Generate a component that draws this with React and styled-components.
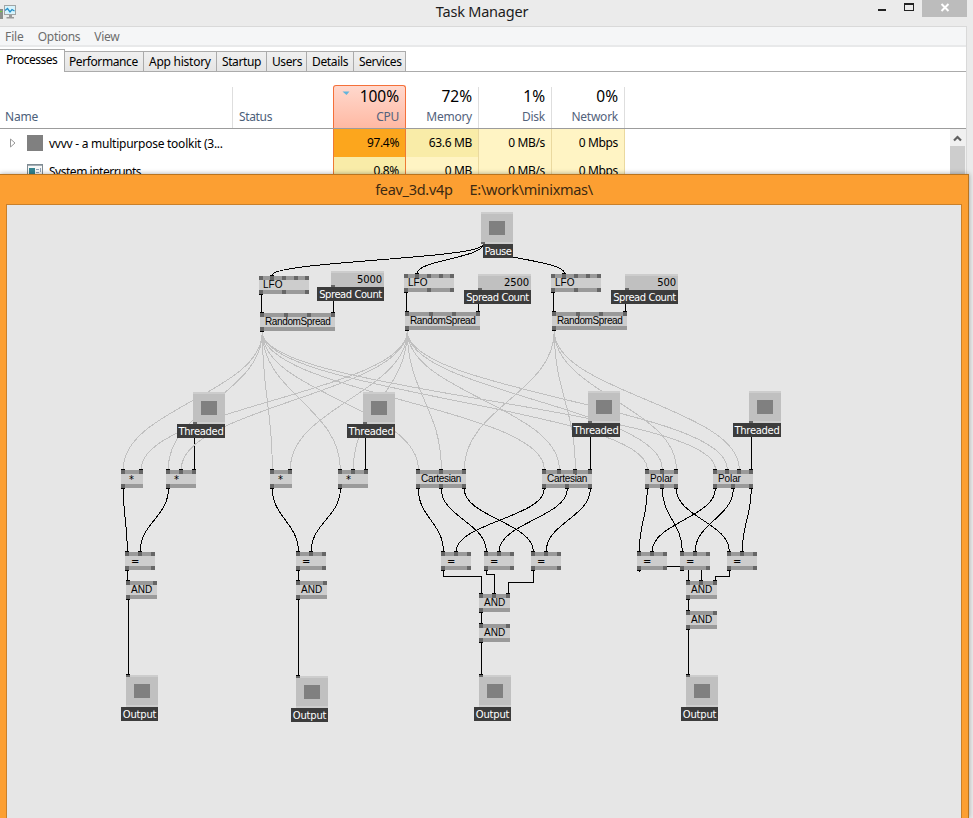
import React from 'react';
import styled, { createGlobalStyle } from 'styled-components';

const GlobalStyle = createGlobalStyle`
  * { box-sizing: border-box; }
  html, body { margin: 0; height: 100%; overflow: hidden; background: #ebebeb; }
  body { font-family: "Noto Sans", "Open Sans", sans-serif; font-size: 12px; color: #000; }
`;

const Desktop = styled.div`
  width: 973px;
  height: 818px;
  display: flex;
  flex-direction: column;
  overflow: hidden;
  background: #ebebeb;
`;

/* ---------- Task manager ---------- */
const TaskManager = styled.section`
  height: 174px;
  flex: none;
  overflow: hidden;
  display: flex;
  flex-direction: column;
`;
const TitleBar = styled.header`
  height: 26px;
  flex: none;
  display: grid;
  grid-template-columns: 160px 1fr 160px;
  align-items: start;
`;
const AppIcon = styled.svg`
  display: block;
  margin-top: 4px;
`;
const Title = styled.h1`
  margin: 0 0 0 -9px;
  font-size: 14.5px;
  line-height: 22px;
  font-weight: 400;
  text-align: center;
  color: #1c1c1c;
  letter-spacing: -0.22px;
`;
const WindowButtons = styled.div`
  display: flex;
  justify-content: flex-end;
  padding-right: 6px;
`;
const WindowButton = styled.span`
  width: ${(p) => p.$w}px;
  height: 17px;
  display: block;
  background: ${(p) => (p.$close ? '#bcbcbc' : 'transparent')};
  svg { display: block; }
`;
const Client = styled.div`
  flex: 1;
  min-height: 0;
  width: 967px;
  background: #fff;
  border-top: 1px solid #d9d9d9;
  border-right: 1px solid #d9d9d9;
  display: flex;
  flex-direction: column;
`;
const MenuBar = styled.nav`
  height: 20px;
  flex: none;
  display: flex;
  gap: 14px;
  padding-left: 5px;
  line-height: 19px;
  color: #6d6d6d;
  background: #f5f6f7;
  border-bottom: 2px solid #e8e9ea;
`;
const MenuItem = styled.span`
  letter-spacing: ${(p) => p.$track}px;
`;
const TabStrip = styled.div`
  height: 25px;
  flex: none;
  padding-top: 2px;
  display: flex;
  align-items: flex-end;
  border-bottom: 1px solid #ababab;
`;
const Tab = styled.div`
  width: ${(p) => p.$w}px;
  height: ${(p) => (p.$active ? 23 : 20)}px;
  margin-bottom: ${(p) => (p.$active ? -1 : 0)}px;
  line-height: 20px;
  padding-left: ${(p) => p.$pad}px;
  white-space: nowrap;
  letter-spacing: ${(p) => p.$track}px;
  background: ${(p) => (p.$active ? '#fff' : 'linear-gradient(#f0f0f0, #e5e5e5)')};
  border-top: 1px solid #ababab;
  border-right: 1px solid #ababab;
`;
const HeaderRow = styled.div`
  height: 57px;
  flex: none;
  padding-top: 13px;
  display: grid;
  grid-template-columns: 233px 100px repeat(4, 73px);
  border-bottom: 1px solid #9c9c9c;
`;
const TextHeader = styled.div`
  margin-top: 2px;
  padding: 20px 0 0 ${(p) => p.$pad}px;
  line-height: 19px;
  color: #4c607a;
  letter-spacing: ${(p) => p.$track}px;
  border-right: ${(p) => (p.$line ? '1px solid #dedede' : '0')};
`;
const MetricHeader = styled.div`
  margin-top: ${(p) => (p.$hot ? 0 : 2)}px;
  padding: ${(p) => (p.$hot ? 1 : 0)}px 6px 0 0;
  display: grid;
  grid-template-columns: 8px 1fr;
  grid-template-rows: 19px 20px;
  text-align: right;
  color: #53627c;
  background: ${(p) => (p.$hot ? 'linear-gradient(#ffd8cd, #ffb9a3)' : '#fff')};
  border: 0 solid #f4703a;
  border-width: ${(p) => (p.$hot ? '1px 1px 0' : '0 1px 0 0')};
  border-color: ${(p) => (p.$hot ? '#f4703a' : '#dedede')};
  border-radius: ${(p) => (p.$hot ? '3px 3px 0 0' : '0')};
`;
const SortArrow = styled.svg`
  margin: 4px 0 0 8px;
`;
const Metric = styled.strong`
  grid-column: 2;
  font-size: 15.5px;
  font-weight: 400;
  line-height: 18px;
  letter-spacing: -0.05px;
  color: #000;
`;
const MetricName = styled.span`
  grid-column: 1 / 3;
  line-height: 21px;
  letter-spacing: -0.25px;
`;
const TableArea = styled.div`
  flex: 1;
  min-height: 0;
  display: grid;
  grid-template-columns: 1fr 16px;
  overflow: hidden;
`;
const ProcessRow = styled.div`
  height: 28px;
  display: grid;
  grid-template-columns: 333px repeat(4, 73px);
  line-height: 27px;
`;
const ProcessName = styled.div`
  display: flex;
  align-items: center;
  white-space: nowrap;
  letter-spacing: ${(p) => p.$track}px;
  svg { flex: none; }
`;
const IconSlot = styled.span`
  width: 22px;
  flex: none;
  display: flex;
`;
const ExpandSlot = styled.span`
  width: 27px;
  flex: none;
  display: flex;
  padding-left: 9px;
`;
const heat = { hot: '#fca61d', warm: '#f9eca8', mild: '#fff4c4' };
const Value = styled.div`
  padding-right: 6px;
  text-align: right;
  white-space: nowrap;
  letter-spacing: -0.35px;
  background: ${(p) => heat[p.$heat]};
  border: 0 solid ${(p) => (p.$cpu ? '#ee7a35' : '#ead9a0')};
  border-width: ${(p) => (p.$cpu ? '0 1px' : '0 1px 0 0')};
`;
const ScrollBar = styled.div`
  display: flex;
  flex-direction: column;
  padding-right: 1px;
  background: #f0f0f0;
`;
const ScrollThumb = styled.div`
  flex: 1;
  background: #cdcdcd;
`;

/* ---------- Patch window ---------- */
const PatchWindow = styled.section`
  flex: 1;
  min-height: 0;
  width: 969px;
  background: #fc9f32;
  border-top: 1px solid #b9741f;
  border-right: 1px solid #b9741f;
  padding: 0 6px;
  display: flex;
  flex-direction: column;
  box-shadow: 0 0 5px rgba(0, 0, 0, 0.35);
  z-index: 1;
`;
const PatchTitle = styled.h2`
  margin: 0;
  height: 29px;
  flex: none;
  display: flex;
  justify-content: center;
  gap: 17px;
  font-size: 14.5px;
  line-height: 29px;
  font-weight: 400;
  color: #3d2a12;
  letter-spacing: -0.3px;
`;
const Canvas = styled.div`
  position: relative;
  flex: 1;
  overflow: hidden;
  background: #e6e6e6;
  border: 1px solid #c9802b;
  border-bottom: 0;
`;
const Wires = styled.svg`
  position: absolute;
  left: 0;
  top: 0;
  display: block;
  fill: none;
  shape-rendering: crispEdges;
`;
const Placed = styled.div`
  position: absolute;
  left: ${(p) => p.$x - 7}px;
  top: ${(p) => p.$y - 205}px;
  width: ${(p) => p.$w}px;
  height: ${(p) => p.$h}px;
`;
const NodeBody = styled(Placed)`
  background: #cdcdcd;
  border: 0 solid #9a9a9a;
  border-width: 4px 0;
  padding-left: ${(p) => p.$pad}px;
  font-family: ${(p) => (p.$operator ? '"DejaVu Sans"' : '"Liberation Sans", Arial')}, sans-serif;
  font-size: 10px;
  line-height: ${(p) => (p.$operator ? 11 : 10)}px;
  white-space: nowrap;
  letter-spacing: ${(p) => p.$track || 0}px;
`;
const Pin = styled.i`
  position: absolute;
  left: ${(p) => p.$at}px;
  ${(p) => (p.$out ? 'bottom' : 'top')}: -4px;
  width: 4px;
  height: ${(p) => (p.$wired ? 5 : 4)}px;
  background: #666;
  margin: ${(p) => (p.$wired ? '-1px 0' : '0')};
  border: 0 solid #000;
  border-${(p) => (p.$out ? 'bottom' : 'top')}-width: ${(p) => (p.$wired ? 1 : 0)}px;
`;
const Toggle = styled(Placed)`
  background: #c0c0c0;
  border: 0 solid #cdcdcd;
  border-width: 2px 0;
  padding: 7px 8px;
`;
const ToggleMark = styled.div`
  height: 14px;
  background: #808080;
`;
const NumberBox = styled(Placed)`
  background: #c0c0c0;
  border-top: 2px solid #cdcdcd;
  padding-right: 2px;
  text-align: right;
  font-family: "DejaVu Sans", sans-serif;
  font-size: 10px;
  line-height: 13px;
  letter-spacing: -0.1px;
`;
const Caption = styled(Placed)`
  background: #3c3c3c;
  color: #fff;
  font-family: "DejaVu Sans", sans-serif;
  font-size: 10px;
  line-height: 16px;
  text-align: center;
  white-space: nowrap;
  letter-spacing: ${(p) => p.$track || -0.2}px;
`;
const BoxPin = styled.i`
  position: absolute;
  left: 0;
  top: ${(p) => (p.$low ? 28 : -3)}px;
  width: 4px;
  height: ${(p) => (p.$low ? 2 : 3)}px;
  background: #666;
  border-top: ${(p) => (p.$low ? 0 : 1)}px solid #000;
`;
const ValuePin = styled.i`
  position: absolute;
  left: 0;
  bottom: 0;
  width: 4px;
  height: 2px;
  background: #666;
`;

function Node({ x, y, w, label, pad = 5, track, operator, ins = [], outs = [], on = [], sent = [] }) {
  return (
    <NodeBody $x={x} $y={y} $w={w} $h={18} $pad={pad} $track={track} $operator={operator}>
      {label}
      {ins.map((p, i) => <Pin key={'i' + p} $at={p} $wired={on.includes(i)} />)}
      {outs.map((p, i) => <Pin key={'o' + p} $at={p} $out $wired={sent.includes(i)} />)}
    </NodeBody>
  );
}

function ToggleBox({ x, y, label, lx, lw, output, track }) {
  return (
    <>
      <Toggle $x={x} $y={y} $w={32} $h={32}>
        <ToggleMark />
        <BoxPin $low={!output} />
      </Toggle>
      <Caption $x={lx} $y={y + 32} $w={lw} $h={14} $track={track}>{label}</Caption>
    </>
  );
}

const curve = (x1, y1, x2, y2) => {
  const c = (y2 - y1) * 0.44;
  return `M${x1 + 0.3} ${y1}C${x1 + 0.3} ${y1 + c} ${x2 + 0.3} ${y2 - c} ${x2 + 0.3} ${y2}`;
};

const spreadLinks = [
  [262, 332, [123, 168, 272, 340, 418, 544, 647, 715]],
  [407, 331, [141, 181, 290, 353, 441, 559, 662, 727]],
  [554, 331, [464, 575, 676, 739]],
];
const curvedLinks = [
  [482, 245, 272, 275], [482, 245, 417, 273], [482, 245, 564, 273],
  [123, 489, 127, 551], [168, 489, 140, 551], [272, 489, 298, 551], [340, 489, 311, 551],
  [418, 489, 443, 551], [441, 489, 486, 551], [464, 489, 533, 551],
  [544, 489, 456, 551], [567, 489, 499, 551], [590, 489, 546, 551],
  [647, 489, 639, 551], [662, 489, 682, 551], [676, 489, 729, 551],
  [715, 489, 652, 551], [733, 489, 695, 551], [751, 489, 742, 551],
];
const verticalLinks = [
  [261, 294, 312], [406, 292, 311], [553, 292, 311],
  [333, 301, 312], [478, 304, 311], [625, 304, 311],
  [194, 438, 469], [365, 438, 469], [590, 437, 469], [751, 437, 469],
  [127, 570, 580], [298, 570, 580], [128, 599, 674], [298, 599, 675],
  [481, 612, 623], [481, 642, 674], [688, 599, 610], [688, 629, 674], [701, 570, 580],
];
const steppedLinks = [
  'M443.5 570V576.5H481.5V594',
  'M486.5 570V574.5H494.5V594',
  'M533.5 570V582.5H508.5V594',
  'M639.5 570V572M667 566.5H688.5V581',
  'M729.5 570V576.5H715.5V581',
];

const lfos = [[259, 276], [404, 274], [551, 274]];
const spreads = [[260, 313], [405, 312], [552, 312]];
const counts = [[331, 271, '5000'], [478, 274, '2500'], [625, 274, '500']];
const equals = [125, 296, 441, 484, 531, 637, 680, 727];

function Patch() {
  return (
    <Canvas>
      <Wires width="954" height="613" viewBox="7 205 954 613">
        <g stroke="#000">
          {curvedLinks.map((l) => <path key={l.join()} d={curve(...l)} />)}
          {verticalLinks.map(([x, a, b]) => <path key={[x, a].join()} d={`M${x + 0.5} ${a}V${b}`} />)}
          {steppedLinks.map((d) => <path key={d} d={d} />)}
        </g>
        <g stroke="#c0c0c0">
          {spreadLinks.map(([x, y, ends]) => ends.map((e) => <path key={e} d={curve(x, y, e, 469)} />))}
        </g>
      </Wires>

      {lfos.map(([x, y]) => (
        <Node key={x} x={x} y={y} w={50} pad={4} label="LFO" ins={[0, 11, 23, 35, 46]} outs={[0, 23, 46]} on={[1]} sent={[0]} />
      ))}
      {spreads.map(([x, y]) => (
        <Node key={x} x={x} y={y} w={75} track={-0.38} label="RandomSpread" ins={[0, 24, 47, 71]} outs={[0]} on={[0, 3]} sent={[0]} />
      ))}
      {counts.map(([x, y, v]) => (
        <React.Fragment key={x}>
          <NumberBox $x={x} $y={y} $w={53} $h={16}>{v}<ValuePin /></NumberBox>
          <Caption $x={x - 14} $y={y + 16} $w={67} $h={14} $track={-0.45}>Spread Count</Caption>
        </React.Fragment>
      ))}
      <ToggleBox x={481} y={212} label="Pause" lx={483} lw={30} track={-0.5} />
      <ToggleBox x={193} y={392} label="Threaded" lx={177} lw={48} track={-0.3} />
      <ToggleBox x={363} y={392} label="Threaded" lx={347} lw={48} track={-0.3} />
      <ToggleBox x={588} y={391} label="Threaded" lx={572} lw={48} track={-0.3} />
      <ToggleBox x={749} y={391} label="Threaded" lx={733} lw={48} track={-0.3} />

      <Node x={121} y={470} w={22} pad={8} operator label="*" ins={[0, 18]} outs={[0]} on={[0, 1]} sent={[0]} />
      <Node x={166} y={470} w={30} pad={8} operator label="*" ins={[0, 13, 26]} outs={[0]} on={[0, 1, 2]} sent={[0]} />
      <Node x={270} y={470} w={22} pad={8} operator label="*" ins={[0, 18]} outs={[0]} on={[0, 1]} sent={[0]} />
      <Node x={338} y={470} w={30} pad={8} operator label="*" ins={[0, 13, 26]} outs={[0]} on={[0, 1, 2]} sent={[0]} />
      <Node x={416} y={470} w={50} track={-0.3} label="Cartesian" ins={[0, 23, 46]} outs={[0, 23, 46]} on={[0, 1, 2]} sent={[0, 1, 2]} />
      <Node x={542} y={470} w={50} track={-0.3} label="Cartesian" ins={[0, 15, 31, 46]} outs={[0, 23, 46]} on={[0, 1, 2, 3]} sent={[0, 1, 2]} />
      <Node x={645} y={470} w={33} track={-0.1} label="Polar" ins={[0, 15, 29]} outs={[0, 15, 29]} on={[0, 1, 2]} sent={[0, 1, 2]} />
      <Node x={713} y={470} w={40} track={-0.1} label="Polar" ins={[0, 12, 24, 36]} outs={[0, 18, 36]} on={[0, 1, 2, 3]} sent={[0, 1, 2]} />

      {equals.map((x) => (
        <Node key={x} x={x} y={552} w={30} pad={6} operator label="=" ins={[0, 13, 26]} outs={[0, 26]} on={[0, 1]} sent={[0]} />
      ))}
      <Node x={126} y={581} w={31} label="AND" ins={[0, 27]} outs={[0]} on={[0]} sent={[0]} />
      <Node x={296} y={581} w={31} label="AND" ins={[0, 27]} outs={[0]} on={[0]} sent={[0]} />
      <Node x={479} y={594} w={31} label="AND" ins={[0, 13, 27]} outs={[0]} on={[0, 1, 2]} sent={[0]} />
      <Node x={479} y={624} w={31} label="AND" ins={[0, 27]} outs={[0]} on={[0]} sent={[0]} />
      <Node x={686} y={581} w={31} label="AND" ins={[0, 13, 27]} outs={[0]} on={[0, 1, 2]} sent={[0]} />
      <Node x={686} y={611} w={31} label="AND" ins={[0, 27]} outs={[0]} on={[0]} sent={[0]} />

      <ToggleBox x={126} y={675} label="Output" lx={121} lw={37} output />
      <ToggleBox x={296} y={676} label="Output" lx={291} lw={37} output />
      <ToggleBox x={479} y={675} label="Output" lx={474} lw={37} output />
      <ToggleBox x={686} y={675} label="Output" lx={681} lw={37} output />
    </Canvas>
  );
}

const tabs = [
  ['Processes', 65, -0.5, 6], ['Performance', 79, -0.4, 4], ['App history', 73, -0.25, 5], ['Startup', 50, -0.4, 5],
  ['Users', 40, -0.4, 5], ['Details', 47, -0.35, 5], ['Services', 52, -0.4, 5],
];

export default function App() {
  return (
    <Desktop>
      <GlobalStyle />
      <TaskManager>
        <TitleBar>
          <AppIcon width="17" height="16" viewBox="0 0 17 16">
            <rect x="0" y="5" width="3" height="10" fill="#8b8f8b" />
            <rect x="0" y="7" width="2" height="1" fill="#6ccb3c" />
            <rect x="4.5" y="1.5" width="11" height="9" fill="#d7f4fd" stroke="#a1a5a5" />
            <path d="M5 6.500L7.500 4.500L10 8L12 5.500L14.500 7" fill="none" stroke="#238fc9" strokeWidth="1.300" />
            <path d="M9 11h3v2h2v1.500H6.500V13H9z" fill="#999" />
          </AppIcon>
          <Title>Task Manager</Title>
          <WindowButtons>
            <WindowButton $w={28}>
              <svg width="28" height="17"><path d="M12 10h8" stroke="#222" strokeWidth="2" /></svg>
            </WindowButton>
            <WindowButton $w={28}>
              <svg width="28" height="17" shapeRendering="crispEdges">
                <rect x="10.5" y="3.5" width="9" height="7" fill="none" stroke="#222" />
                <path d="M10 4h10" stroke="#222" strokeWidth="2" />
              </svg>
            </WindowButton>
            <WindowButton $w={45} $close>
              <svg width="45" height="17"><path d="M19.500 4L26.500 11M26.500 4L19.500 11" stroke="#fff" strokeWidth="2" /></svg>
            </WindowButton>
          </WindowButtons>
        </TitleBar>
        <Client>
          <MenuBar>
            <MenuItem $track={-0.1}>File</MenuItem>
            <MenuItem $track={-0.3}>Options</MenuItem>
            <MenuItem $track={-0.3}>View</MenuItem>
          </MenuBar>
          <TabStrip>
            {tabs.map(([name, w, track, pad], i) => (
              <Tab key={name} $w={w} $track={track} $pad={pad} $active={i === 0}>{name}</Tab>
            ))}
          </TabStrip>
          <HeaderRow>
            <TextHeader $pad={5} $track={-0.2} $line>Name</TextHeader>
            <TextHeader $pad={6} $track={-0.35}>Status</TextHeader>
            <MetricHeader $hot>
              <SortArrow width="8" height="5" viewBox="0 0 8 5"><path d="M0.500 0.500h7L4.500 4z" fill="#62b4dc" /></SortArrow>
              <Metric>100%</Metric><MetricName>CPU</MetricName>
            </MetricHeader>
            <MetricHeader><Metric>72%</Metric><MetricName>Memory</MetricName></MetricHeader>
            <MetricHeader><Metric>1%</Metric><MetricName>Disk</MetricName></MetricHeader>
            <MetricHeader><Metric>0%</Metric><MetricName>Network</MetricName></MetricHeader>
          </HeaderRow>
          <TableArea>
            <div>
              <ProcessRow>
                <ProcessName $track={-0.25}>
                  <ExpandSlot><svg width="8" height="10" viewBox="0 0 8 10"><path d="M1.500 1v8L6 5z" fill="#fff" stroke="#999" /></svg></ExpandSlot>
                  <IconSlot><svg width="16" height="16"><rect width="16" height="16" fill="#808080" /></svg></IconSlot>
                  vvvv - a multipurpose toolkit (3...
                </ProcessName>
                <Value $cpu $heat="hot">97.4%</Value>
                <Value $heat="warm">63.6 MB</Value>
                <Value $heat="mild">0 MB/s</Value>
                <Value $heat="mild">0 Mbps</Value>
              </ProcessRow>
              <ProcessRow>
                <ProcessName $track={-0.48}>
                  <ExpandSlot />
                  <IconSlot>
                    <svg width="16" height="14" viewBox="0 0 16 14">
                      <rect x="0.500" y="0.500" width="15" height="14" fill="#f7f7f7" stroke="#7f8b92" />
                      <path d="M1 1.500h14" stroke="#a3adb5" />
                      <rect x="2" y="4" width="6" height="9" fill="#34848f" />
                      <path d="M9 5.500h3M9 8.500h3M9 11.500h3M13.500 4v4" stroke="#8fa3b8" />
                    </svg>
                  </IconSlot>
                  System interrupts
                </ProcessName>
                <Value $cpu $heat="warm">0.8%</Value>
                <Value $heat="mild">0 MB</Value>
                <Value $heat="mild">0 MB/s</Value>
                <Value $heat="mild">0 Mbps</Value>
              </ProcessRow>
            </div>
            <ScrollBar>
              <svg width="15" height="17"><path d="M4 11.500L7.500 8L11 11.500" fill="none" stroke="#606060" strokeWidth="2.200" /></svg>
              <ScrollThumb />
            </ScrollBar>
          </TableArea>
        </Client>
      </TaskManager>
      <PatchWindow>
        <PatchTitle><span>feav_3d.v4p</span><span>E:\work\minixmas\</span></PatchTitle>
        <Patch />
      </PatchWindow>
    </Desktop>
  );
}
